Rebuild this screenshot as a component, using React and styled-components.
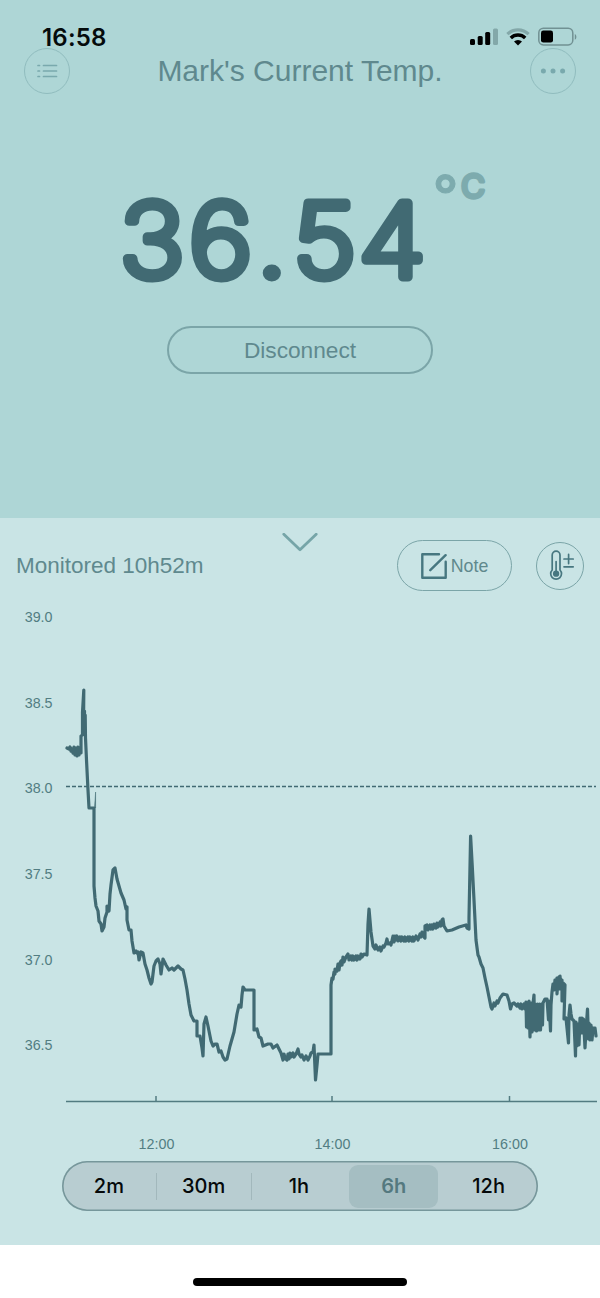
import styled, { createGlobalStyle } from "styled-components";

const GlobalStyle = createGlobalStyle`
  * {
    box-sizing: border-box;
  }

  body {
    margin: 0;
    background: #ffffff;
    font-family: "Liberation Sans", Arial, sans-serif;
  }

  svg {
    display: block;
  }
`;

const Screen = styled.main`
  width: 600px;
  height: 1298px;
  display: flex;
  flex-direction: column;
  overflow: hidden;
`;

const Hero = styled.section`
  height: 518px;
  display: flex;
  flex-direction: column;
  background: #aed6d6;
`;

const StatusBar = styled.div`
  height: 48px;
  padding: 27px 23px 0 42px;
  display: flex;
  justify-content: space-between;
  align-items: flex-start;
`;

const Clock = styled.span`
  font: 600 24px/22px Inter, sans-serif;
  letter-spacing: 0.2px;
  color: #050b0c;
`;

const StatusIcons = styled.div`
  display: flex;
  gap: 8px;
`;

const TitleBar = styled.header`
  height: 46px;
  padding: 0 24px;
  display: flex;
  justify-content: space-between;
  align-items: center;
`;

const Title = styled.h1`
  margin: 0;
  font-size: 30px;
  font-weight: 400;
  line-height: 46px;
  color: #5f898e;
`;

const RoundButton = styled.button`
  width: ${({ $size }) => $size}px;
  height: ${({ $size }) => $size}px;
  padding: 0 0 0 ${({ $shift }) => $shift || 0}px;
  display: flex;
  align-items: center;
  justify-content: center;
  border: 1px solid ${({ $line }) => $line};
  border-radius: 50%;
  background: transparent;
`;

const Reading = styled.svg`
  margin-top: 56px;
  margin-bottom: 16px;

  text {
    font-family: Inter, sans-serif;
    stroke-linejoin: round;
    stroke-linecap: round;
  }
`;

const DisconnectButton = styled.button`
  width: 266px;
  height: 48px;
  padding: 0;
  align-self: center;
  border: 2px solid #7ba5a8;
  border-radius: 24px;
  background: transparent;
  font: 400 22.7px/44px "Liberation Sans", Arial, sans-serif;
  color: #5f898e;
`;

const Panel = styled.section`
  height: 727px;
  padding-top: 15px;
  background: #c9e4e5;
`;

const PanelHead = styled.div`
  height: 58px;
  padding: 0 16px;
  display: grid;
  grid-template-columns: 1fr auto 1fr;
`;

const Monitored = styled.span`
  align-self: end;
  font-size: 22.5px;
  line-height: 50px;
  white-space: nowrap;
  color: #5f898e;
`;

const Actions = styled.div`
  align-self: end;
  display: flex;
  justify-content: flex-end;
  align-items: center;
  gap: 24px;
`;

const NoteButton = styled.button`
  width: 115px;
  height: 51px;
  padding: 0;
  display: flex;
  align-items: center;
  justify-content: center;
  gap: 4px;
  border: 1px solid #7ba5a8;
  border-radius: 26px;
  background: transparent;
  font: 400 17.8px/48px "Liberation Sans", Arial, sans-serif;
  color: #5f898d;
`;

const Chart = styled.svg`
  margin-top: 9px;

  text {
    font-family: "Liberation Sans", Arial, sans-serif;
    font-size: 14.3px;
    fill: #527d82;
  }
`;

const Ranges = styled.div`
  width: 476px;
  height: 50px;
  margin: 5px auto 0;
  padding-right: 2px;
  display: grid;
  grid-template-columns: repeat(5, 1fr);
  align-items: center;
  border-radius: 25px;
  background: #b8cdd1;
  box-shadow: inset 0 0 0 1.6px #76979b;
`;

const Range = styled.button`
  height: ${({ $active }) => ($active ? 43 : 27)}px;
  margin: 0 ${({ $active }) => ($active ? 3 : 0)}px;
  padding: 0;
  border: 0;
  border-right: ${({ $divider }) => ($divider ? "1px solid #a2b8bc" : "0")};
  border-radius: ${({ $active }) => ($active ? 9 : 0)}px;
  background: ${({ $active }) => ($active ? "#a5bec2" : "transparent")};
  color: ${({ $active }) => ($active ? "#54797f" : "#05090a")};
  font: ${({ $active }) => ($active ? 600 : 500)} 20px/27px Inter, sans-serif;
`;

const HomeArea = styled.footer`
  flex: 1;
  padding-top: 33px;
  display: flex;
  justify-content: center;
`;

const HomeIndicator = styled.div`
  width: 214px;
  height: 8px;
  border-radius: 4px;
  background: #000000;
`;

const yLabels = [
  ["39.0", 617],
  ["38.5", 703],
  ["38.0", 788],
  ["37.5", 874],
  ["37.0", 960],
  ["36.5", 1045],
];

const xLabels = [
  ["12:00", 156],
  ["14:00", 332],
  ["16:00", 509.5],
];

const ranges = ["2m", "30m", "1h", "6h", "12h"];

const trace = [
  "67,748 69,749 70,747 71,751 72,749 73,753 74,747 75,755 76,748 77,756 78,747 79,755 80,748 81,753 81,736 82.5,735",
  "82.5,712 83.8,690 83.5,732 84.5,711 84.5,732 85.2,715 85.5,738 86.5,760 88,790 89,808 94,808",
  "94,886 95,898 96,906 98,911 99,921 101,924 102,931 104,927 105,918 107,912 107,906 109,911 110,894 111,885 113,870 115,868",
  "117,879 119,886 121,893 124,900 126,909 127,907 127,920 129,930 131,930 132,941 134,953 136,951 137,953 138,952 139,960 141,952 143,953 145,964",
  "147,970 149,978 151,984 152,982 154,966 156,961 158,959 160,964 161,974 163,959 166,965 169,970 172,968 174,970 178,966 181,969 183,970",
  "185,979 187,990 189,1004 191,1015 194,1021 197,1021 197,1036 200,1036 202,1048 203,1056 204,1024 206,1017 208,1026 211,1041 213,1046 215,1044 217,1044 219,1052 221,1051 223,1057 225,1060 227,1059",
  "230,1046 234,1032 237,1014 239,1005 241,1007 242,995 243,987 245,990 254,990 254,1030 257,1029 259,1037 261,1038 263,1046 268,1044 271,1044 273,1048 277,1045 279,1049 281,1053 283,1060",
  "284,1054 285,1058 287,1060 288,1054 289,1059 290,1053 291,1057 293,1053 294,1057 296,1054 298,1049 299,1054 301,1057 302,1055 304,1060 306,1056 308,1060 310,1056 311,1053 313,1052 314,1045 315.5,1080 317,1065 318,1054 331,1054",
  "331,985 332,978 333,979 334,972 335,974 335,969 337,971 338,964 339,970 340,963 341,961 342,965 343,957 344,962 346,957 348,954 349,960 351,956 352,960 353,956 354,960 356,956 357,960 358,956 360,959 361,954 362,957 364,954 367,955 368,924 369,909 371,932 373,946 375,949",
  "376,945 378,950 380,947 381,951 383,946 384,947 386,943 387,939 388,944 390,943 391,945 393,936 394,942 395,936",
  "396,940 397,936 398,941 400,937 401,941 402,937 404,941 405,937 406,941 408,937 409,941 410,937 412,941 413,937 414,941 416,936 418,940 420,934 421,937 422,932 424,937 425,938 425,926 427,925 428,930 430,925 431,929 432,925 433,929 434,924 436,928 437,923 438,927 440,922 441,926 442,920 443,919 444,926 447,931 452,930 459,927 466,925 467,928 469,929 469,918",
  "470.6,836 472.2,865 474,900 476,940 478,955 479,957 481,964 483,968 485,978 487,987 489,997 491,1007 492,1009 494,1003 495,1006 497,1001 498,1003 500,998 503,994 507,995 508,998 509,1001 510.5,1009 512,1004 514,1003 517,1006 518,1004 520,1008 521,1004 522,1009 524,1004 525,1009 526,1002",
  "526.5,1027 527.5,1004 528,1028 529,1001 530,1037 531,1003 532,1032 533,1004 534,995 534.5,1030 535.5,1004 536.5,1031 537.5,1004 538.5,1030 539.5,1004 540.5,1030 541.5,1004 542.5,1025 543,1003 545,999 547,999 548.5,1020 549,1001 550.5,1031 551,1005",
  "552,992 553,984 554,990 555,980 556,988 557,978 557,994 558,979 559,977 560,989 560,976 561,987 562,980 562,1001 563,983 565,985 564,1019 566,1018 568.5,1043 569,1015",
  "570,1005 571,1014 572,1019 574,1021 575.5,1056 576,1022 577,1046 578,1024 579,1045 580,1018 581,1033 582,1018 583,1033 583.5,1019 585,1048 586,1030 587.5,1009 588.5,1039 589,1023 590,1040 591,1025 592,1040 593,1028 595,1028 596,1036",
].join(" ");

function SignalIcon() {
  return (
    <svg width="28" height="20" viewBox="0 0 28 20">
      <rect x="0" y="12" width="5" height="6" rx="1.5" />
      <rect x="7.7" y="9" width="5" height="9" rx="1.5" />
      <rect x="15.2" y="5" width="5" height="13" rx="1.5" />
      <rect x="23" y="1.5" width="5" height="16.5" rx="1.5" fill="#83a8a9" />
    </svg>
  );
}

function WifiIcon() {
  return (
    <svg width="24" height="20" viewBox="0 0 24 20" fill="none" strokeWidth="3.2">
      <path d="M1.4 7.2a15.3 15.3 0 0 1 21.2 0" stroke="#83a8a9" />
      <path d="M4.8 11a10.2 10.2 0 0 1 14.4 0" stroke="#000" strokeWidth="3.4" />
      <path d="M8 14.6a5.7 5.7 0 0 1 8 0L12 18.4z" fill="#000" />
    </svg>
  );
}

function BatteryIcon() {
  return (
    <svg width="39" height="20" viewBox="0 0 39 20">
      <rect x="0.8" y="1.3" width="34" height="16.6" rx="4.6" fill="none" stroke="#719193" strokeWidth="1.5" />
      <path d="M36.8 7c2.1.8 2.1 5 0 5.8z" fill="#719193" />
      <rect x="3" y="3.6" width="12" height="12" rx="2.3" />
    </svg>
  );
}

function ListIcon() {
  return (
    <svg width="21" height="14" viewBox="0 0 21 14" stroke="#79a9ad" strokeWidth="1.7" strokeLinecap="round">
      <path d="M1 1.5h1.5M1 7h1.5M1 12.5h1.5M6.5 1.5h13M6.5 7h13M6.5 12.5h13" />
    </svg>
  );
}

function MoreIcon() {
  return (
    <svg width="26" height="6" viewBox="0 0 26 6" fill="#79a9ad">
      <circle cx="3.4" cy="3" r="2.5" />
      <circle cx="13" cy="3" r="2.5" />
      <circle cx="22.6" cy="3" r="2.5" />
    </svg>
  );
}

function ChevronIcon() {
  return (
    <svg width="36" height="20" viewBox="0 0 36 20" fill="none" stroke="#76a5a8" strokeWidth="2.8" strokeLinecap="round" strokeLinejoin="round">
      <path d="M1.8 1.2 18 16.8 34.2 1.2" />
    </svg>
  );
}

function NoteIcon() {
  return (
    <svg width="26" height="26" viewBox="0 0 26 26" fill="none" stroke="#477780" strokeWidth="2.4" strokeLinecap="round" strokeLinejoin="round">
      <path d="M18 1.3H1.3v23.4h23.4V8.7" />
      <path d="M9.3 17.2 24.6 2.2" />
    </svg>
  );
}

function ThermometerIcon() {
  return (
    <svg width="26" height="31" viewBox="0 0 26 31" fill="none" stroke="#477780" strokeWidth="1.7" strokeLinecap="round">
      <path d="M3.2 20V5a3.9 3.9 0 0 1 7.8 0v15a5.4 5.4 0 1 1-7.8 0z" />
      <circle cx="7.1" cy="23.7" r="2.3" fill="#477780" />
      <path d="M7.1 11.5v11M15 9h9.2M19.6 4.4v9.2M15 16.8h9.2" />
    </svg>
  );
}

// thin digits with a thick round outline give the soft stroke ends
function TemperatureReading() {
  return (
    <Reading width="600" height="160" viewBox="0 150 600 160">
      <text
        x="112 176.3 240 273.9 335.2"
        y="277.5"
        transform="scale(1.07 1)"
        fontSize="102"
        fontWeight="200"
        fill="#416a73"
        stroke="#416a73"
        strokeWidth="9"
      >
        36.54
      </text>
      <text fill="#7dabae" stroke="#7dabae">
        <tspan x="433.5" y="216" fontSize="60" fontWeight="700" strokeWidth="1.2" fontFamily="Liberation Sans">
          °
        </tspan>
        <tspan x="461" y="197.5" fontSize="33" fontWeight="400" strokeWidth="3.6">
          C
        </tspan>
      </text>
    </Reading>
  );
}

function TemperatureChart() {
  return (
    <Chart width="600" height="556" viewBox="0 600 600 556">
      {yLabels.map(([label, y]) => (
        <text key={label} x="24.7" y={y + 5.3}>
          {label}
        </text>
      ))}
      <path d="M66 786.4H596" stroke="#416a73" strokeWidth="1.5" strokeDasharray="4 2" />
      <path d="M94.5 808 95.6 792V808" fill="#416a73" stroke="#416a73" strokeWidth="0.5" />
      <polyline points={trace} fill="none" stroke="#416a73" strokeWidth="3.2" strokeLinejoin="round" strokeLinecap="round" />
      <path d="M66 1101.4H597" stroke="#527b81" strokeWidth="1.5" />
      {xLabels.map(([label, x]) => (
        <g key={label}>
          <path d={`M${x} 1096v5`} stroke="#527b81" strokeWidth="1.5" />
          <text x={x + 0.5} y="1148.5" textAnchor="middle">
            {label}
          </text>
        </g>
      ))}
    </Chart>
  );
}

export default function App() {
  return (
    <Screen>
      <GlobalStyle />
      <Hero>
        <StatusBar>
          <Clock>16:58</Clock>
          <StatusIcons>
            <SignalIcon />
            <WifiIcon />
            <BatteryIcon />
          </StatusIcons>
        </StatusBar>
        <TitleBar>
          <RoundButton $size={46} $line="#90bcbe">
            <ListIcon />
          </RoundButton>
          <Title>Mark's Current Temp.</Title>
          <RoundButton $size={46} $line="#90bcbe">
            <MoreIcon />
          </RoundButton>
        </TitleBar>
        <TemperatureReading />
        <DisconnectButton>Disconnect</DisconnectButton>
      </Hero>
      <Panel>
        <PanelHead>
          <Monitored>Monitored 10h52m</Monitored>
          <ChevronIcon />
          <Actions>
            <NoteButton>
              <NoteIcon />
              Note
            </NoteButton>
            <RoundButton $size={48} $line="#7ba5a8" $shift={4}>
              <ThermometerIcon />
            </RoundButton>
          </Actions>
        </PanelHead>
        <TemperatureChart />
        <Ranges>
          {ranges.map((range, i) => (
            <Range key={range} $active={range === "6h"} $divider={i < 2}>
              {range}
            </Range>
          ))}
        </Ranges>
      </Panel>
      <HomeArea>
        <HomeIndicator />
      </HomeArea>
    </Screen>
  );
}
